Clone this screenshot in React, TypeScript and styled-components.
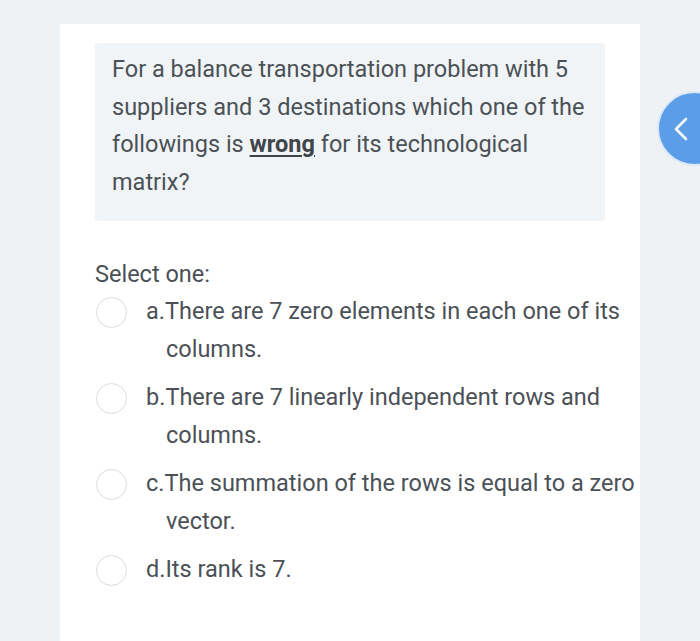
import React from "react";
import styled, { createGlobalStyle } from "styled-components";

const GlobalStyle = createGlobalStyle`
    html, body {
        margin: 0;
        padding: 0;
        background: #eff2f4;
        font-family: Roboto, "Liberation Sans", sans-serif;
        overflow: hidden;
    }
`;

const Page = styled.div`
    position: relative;
    width: 700px;
    height: 641px;
    padding-top: 24px;
    padding-left: 60px;
    box-sizing: border-box;
    overflow: hidden;
`;

const Card = styled.div`
    width: 580px;
    height: 640px;
    background: #fff;
    padding: 19px 35px 0 35px;
    box-sizing: border-box;
`;

const QuestionBox = styled.div`
    background: #f1f4f6;
    border-radius: 3px;
    padding: 8px 17px 20px 17px;
    font-size: 23.5px;
    line-height: 37.5px;
    color: #4b5157;
`;

const Strong = styled.strong`
    font-weight: 700;
    color: #3f454b;
    text-decoration: underline;
    text-decoration-thickness: 2px;
    text-underline-offset: 3px;
`;

const Prompt = styled.div`
    margin-top: 38px;
    font-size: 23.5px;
    line-height: 30px;
    color: #4b5157;
`;

const Options = styled.div`
    display: flex;
    flex-direction: column;
    gap: 12px;
    margin-top: 5px;
`;

const Option = styled.label`
    display: flex;
    align-items: flex-start;
    gap: 19px;
    padding-left: 1px;
`;

const Radio = styled.span`
    flex: none;
    width: 31px;
    height: 31px;
    margin-top: 3px;
    border-radius: 50%;
    border: 1px solid #d9dcdf;
    background: #fff;
    box-sizing: border-box;
`;

const OptionText = styled.div`
    flex: none;
    font-size: 23.5px;
    line-height: 38px;
    color: #4b5157;
    padding-left: 20px;
    text-indent: -20px;
    margin-top: -2px;
    width: 496px;
    box-sizing: border-box;
`;

const Toggle = styled.button`
    position: absolute;
    left: 657px;
    top: 91px;
    width: 75px;
    height: 75px;
    border-radius: 50%;
    border: 2px solid #dce9f8;
    background: #5b9de6;
    padding: 0 0 0 14px;
    display: flex;
    align-items: center;
    cursor: pointer;
`;

const options = [
    { key: "a", text: "There are 7 zero elements in each one of its columns." },
    { key: "b", text: "There are 7 linearly independent rows and columns." },
    { key: "c", text: "The summation of the rows is equal to a zero vector." },
    { key: "d", text: "Its rank is 7." },
];

const App: React.FC = () => (
    <>
        <GlobalStyle />
        <Page>
            <Card>
                <QuestionBox>
                    For a balance transportation problem with 5 suppliers and 3 destinations which
                    one of the followings is <Strong>wrong</Strong> for its technological matrix?
                </QuestionBox>
                <Prompt>Select one:</Prompt>
                <Options>
                    {options.map((o) => (
                        <Option key={o.key}>
                            <Radio />
                            <OptionText>
                                {o.key}.{o.text}
                            </OptionText>
                        </Option>
                    ))}
                </Options>
            </Card>
            <Toggle aria-label="Open drawer">
                <svg width="16" height="24" viewBox="0 0 16 24" fill="none">
                    <path d="M13 2 L3 12 L13 22" stroke="#fff" strokeWidth="2.6" strokeLinecap="round" strokeLinejoin="round" />
                </svg>
            </Toggle>
        </Page>
    </>
);

export default App;
